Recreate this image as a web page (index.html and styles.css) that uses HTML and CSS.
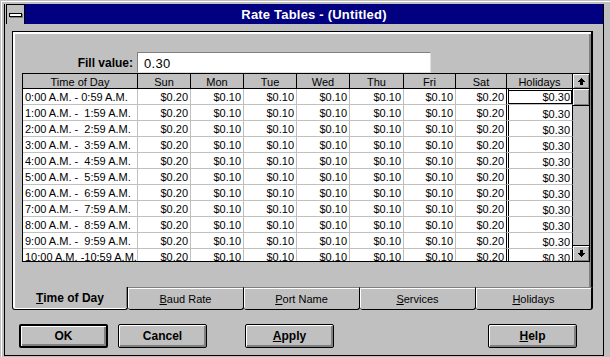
FILE: index.html
```html
<!DOCTYPE html>
<html>
<head>
<meta charset="utf-8">
<link rel="stylesheet" href="styles.css">
</head>
<body>
<div class="window">
 <div class="win-edge">
  <div class="frame">
   <div class="titlebar">
    <div class="sysbox"><span></span></div>
    <div class="caption">Rate Tables - (Untitled)</div>
   </div>
   <div class="panel">
    <div class="fillrow">
     <div class="fill-label">Fill value:</div>
     <div class="fill-input">0.30</div>
    </div>
    <div class="grid">
     <div class="table">
      <div class="hrow">
       <div>Time of Day</div><div>Sun</div><div>Mon</div><div>Tue</div><div>Wed</div><div>Thu</div><div>Fri</div><div class="sat">Sat</div><div class="hol">Holidays</div>
      </div>
      <div class="row"><div class="t">0:00 A.M. - 0:59 A.M.</div><div>$0.20</div><div>$0.10</div><div>$0.10</div><div>$0.10</div><div>$0.10</div><div>$0.10</div><div class="sat">$0.20</div><div class="hol sel">$0.30</div></div>
      <div class="row"><div class="t">1:00 A.M. -  1:59 A.M.</div><div>$0.20</div><div>$0.10</div><div>$0.10</div><div>$0.10</div><div>$0.10</div><div>$0.10</div><div class="sat">$0.20</div><div class="hol">$0.30</div></div>
      <div class="row"><div class="t">2:00 A.M. -  2:59 A.M.</div><div>$0.20</div><div>$0.10</div><div>$0.10</div><div>$0.10</div><div>$0.10</div><div>$0.10</div><div class="sat">$0.20</div><div class="hol">$0.30</div></div>
      <div class="row"><div class="t">3:00 A.M. -  3:59 A.M.</div><div>$0.20</div><div>$0.10</div><div>$0.10</div><div>$0.10</div><div>$0.10</div><div>$0.10</div><div class="sat">$0.20</div><div class="hol">$0.30</div></div>
      <div class="row"><div class="t">4:00 A.M. -  4:59 A.M.</div><div>$0.20</div><div>$0.10</div><div>$0.10</div><div>$0.10</div><div>$0.10</div><div>$0.10</div><div class="sat">$0.20</div><div class="hol">$0.30</div></div>
      <div class="row"><div class="t">5:00 A.M. -  5:59 A.M.</div><div>$0.20</div><div>$0.10</div><div>$0.10</div><div>$0.10</div><div>$0.10</div><div>$0.10</div><div class="sat">$0.20</div><div class="hol">$0.30</div></div>
      <div class="row"><div class="t">6:00 A.M. -  6:59 A.M.</div><div>$0.20</div><div>$0.10</div><div>$0.10</div><div>$0.10</div><div>$0.10</div><div>$0.10</div><div class="sat">$0.20</div><div class="hol">$0.30</div></div>
      <div class="row"><div class="t">7:00 A.M. -  7:59 A.M.</div><div>$0.20</div><div>$0.10</div><div>$0.10</div><div>$0.10</div><div>$0.10</div><div>$0.10</div><div class="sat">$0.20</div><div class="hol">$0.30</div></div>
      <div class="row"><div class="t">8:00 A.M. -  8:59 A.M.</div><div>$0.20</div><div>$0.10</div><div>$0.10</div><div>$0.10</div><div>$0.10</div><div>$0.10</div><div class="sat">$0.20</div><div class="hol">$0.30</div></div>
      <div class="row"><div class="t">9:00 A.M. -  9:59 A.M.</div><div>$0.20</div><div>$0.10</div><div>$0.10</div><div>$0.10</div><div>$0.10</div><div>$0.10</div><div class="sat">$0.20</div><div class="hol">$0.30</div></div>
      <div class="row"><div class="t">10:00 A.M. -10:59 A.M.</div><div>$0.20</div><div>$0.10</div><div>$0.10</div><div>$0.10</div><div>$0.10</div><div>$0.10</div><div class="sat">$0.20</div><div class="hol">$0.30</div></div>
     </div>
     <div class="vscroll">
      <div class="sbtn up"><svg width="7" height="7" viewBox="0 0 7 7" shape-rendering="crispEdges"><path d="M3 0h1v1h1v1h1v1h1v1h-2v3h-3v-3h-2v-1h1v-1h1v-1h1z" fill="#000"/></svg></div>
      <div class="thumb"></div>
      <div class="track"></div>
      <div class="sbtn down"><svg width="7" height="7" viewBox="0 0 7 7" shape-rendering="crispEdges"><path d="M3 7h1v-1h1v-1h1v-1h1v-1h-2v-3h-3v3h-2v1h1v1h1v1h1z" fill="#000"/></svg></div>
     </div>
    </div>
   </div>
   <div class="tabs">
    <div class="tab active"><span><u>T</u>ime of Day</span></div>
    <div class="tab"><span><u>B</u>aud Rate</span></div>
    <div class="tab"><span><u>P</u>ort Name</span></div>
    <div class="tab"><span><u>S</u>ervices</span></div>
    <div class="tab last"><span><u>H</u>olidays</span></div>
   </div>
   <div class="btnrow">
    <div class="btn default">OK</div>
    <div class="btn cancel">Cancel</div>
    <div class="btn apply"><span><u>A</u>pply</span></div>
    <div class="btn help"><span><u>H</u>elp</span></div>
   </div>
  </div>
 </div>
</div>
</body>
</html>
```
FILE: styles.css
```css
* { box-sizing: border-box; }
body {
  margin: 0;
  background: #c0c0c0;
  font-family: "Liberation Sans", Arial, sans-serif;
  color: #000;
}
.window {
  width: 610px;
  height: 357px;
  padding: 1px 0 0 1px;
  overflow: hidden;
}
.win-edge {
  height: 100%;
  border-top: 1px solid #fff;
  border-left: 1px solid #fff;
  padding: 2px 0 0 2px;
}
.frame {
  width: 600px;
  height: 352px;
  border: 1px solid #000;
  border-top: 0;
  display: flex;
  flex-direction: column;
}
.titlebar {
  display: flex;
  height: 20px;
  margin-left: 1px;
}
.sysbox {
  width: 19px;
  border: 1px solid #000;
  border-bottom: 0;
  background: #c0c0c0;
  display: flex;
  align-items: center;
  justify-content: center;
}
.sysbox span {
  width: 13px;
  height: 4px;
  background: #fff;
  border: 1px solid #000;
  box-shadow: 1px 1px 0 #808080;
}
.caption {
  flex: 1;
  background: #000080;
  color: #fff;
  font-weight: bold;
  font-size: 13px;
  letter-spacing: 0.2px;
  display: flex;
  align-items: center;
  justify-content: center;
}
.panel {
  margin: 7px 0 0 7px;
  width: 581px;
  height: 256px;
  border-top: 1px solid #000;
  border-left: 1px solid #000;
  border-right: 2px solid #000;
  box-shadow: inset 2px 2px 0 #fff, inset -2px 0 0 #808080;
}
.fillrow {
  display: flex;
  align-items: center;
  margin-top: 20px;
  padding-left: 9px;
  height: 21px;
}
.fill-label {
  width: 111px;
  margin-right: 4px;
  text-align: right;
  font-weight: bold;
  font-size: 12px;
}
.fill-input {
  width: 294px;
  height: 21px;
  background: #fff;
  border-top: 1px solid #808080;
  border-left: 1px solid #808080;
  border-right: 1px solid #dfdfdf;
  border-bottom: 1px solid #dfdfdf;
  font-size: 13px;
  padding: 3px 0 0 6px;
  letter-spacing: 0.3px;
}
.grid {
  margin-left: 9px;
  width: 568px;
  height: 189px;
  border: 1px solid #000;
  display: flex;
  overflow: hidden;
  background: #fff;
}
.table {
  width: 550px;
  font-size: 11px;
}
.hrow, .row {
  display: grid;
  grid-template-columns: 115px 53px 53px 53px 53px 54px 52px 51px 66px;
}
.hrow {
  height: 15px;
  border-bottom: 1px solid #000;
  background: #c0c0c0;
}
.hrow div {
  height: 14px;
  border-right: 1px solid #000;
  text-align: center;
  line-height: 12px;
  padding-top: 2px;
  overflow: hidden;
}
.row {
  height: 16px;
}
.row div {
  height: 16px;
  border-right: 1px solid #c0c0c0;
  border-bottom: 1px solid #c0c0c0;
  line-height: 14px;
  padding: 1px 2px 0 0;
  text-align: right;
  overflow: hidden;
  white-space: pre;
}
.row .t {
  text-align: left;
  padding-left: 2px;
}
.row .sat { border-right-color: #000; }
.row .hol {
  border-right-color: #000;
  box-shadow: inset 1px 0 0 #fff, inset 2px 0 0 #000;
  padding-top: 2px;
}
.row .sel {
  outline: 1px solid #000;
  outline-offset: -2px;
  padding-top: 1px;
}
.vscroll {
  width: 16px;
  display: flex;
  flex-direction: column;
  background: #c0c0c0;
}
.sbtn {
  height: 15px;
  border-bottom: 1px solid #000;
  box-shadow: inset 1px 1px 0 #fff, inset -1px -1px 0 #808080;
  display: flex;
  align-items: center;
  justify-content: center;
}
.sbtn.down {
  height: 16px;
  border-bottom: 0;
  border-top: 1px solid #000;
}
.thumb {
  height: 17px;
  border-bottom: 1px solid #000;
  box-shadow: inset 1px 1px 0 #fff, inset -1px -1px 0 #808080;
}
.track { flex: 1; }
.tabs {
  display: flex;
  margin-left: 7px;
  width: 581px;
  height: 23px;
  font-size: 11px;
}
.tab {
  width: 116px;
  display: flex;
  align-items: center;
  justify-content: center;
  border-top: 1px solid #808080;
  border-right: 1px solid #000;
  border-bottom: 1px solid #000;
  border-radius: 0 0 3px 3px;
  box-shadow: inset 1px 1px 0 #fff;
}
.tab.active {
  border-top: 0;
  border-left: 1px solid #000;
  font-weight: bold;
  font-size: 12px;
  box-shadow: inset 2px 0 0 #fff, inset 0 -1px 0 #fff, inset -1px 0 0 #808080;
}
.tab.last {
  width: 117px;
  border-right: 2px solid #000;
}
.btnrow {
  display: flex;
  margin-top: 14px;
  padding: 0 26px 0 14px;
}
.btn {
  width: 89px;
  height: 24px;
  border: 1px solid #000;
  border-radius: 2px;
  background: #c0c0c0;
  box-shadow: inset 1px 1px 0 #fff, inset -2px -2px 0 #808080;
  font-weight: bold;
  font-size: 12px;
  display: flex;
  align-items: center;
  justify-content: center;
}
.btn.default { border-width: 2px; }
.btn.cancel { margin-left: 10px; }
.btn.apply { margin-left: 38px; }
.btn.help { margin-left: auto; }
```
